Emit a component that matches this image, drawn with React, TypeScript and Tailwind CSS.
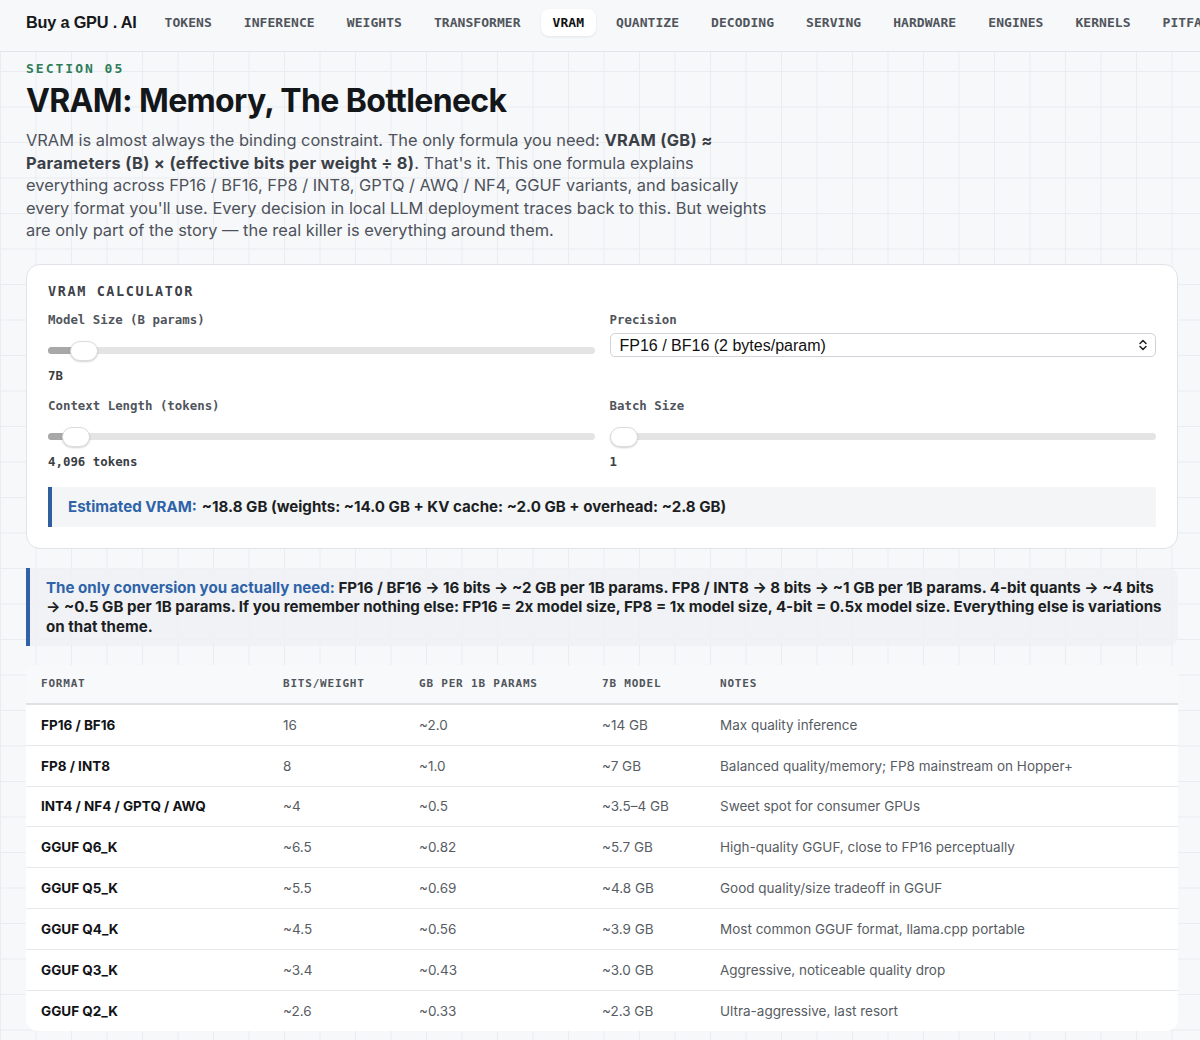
import { useState } from 'react'
import * as Slider from '@radix-ui/react-slider'

const navItems = [
  'TOKENS',
  'INFERENCE',
  'WEIGHTS',
  'TRANSFORMER',
  'VRAM',
  'QUANTIZE',
  'DECODING',
  'SERVING',
  'HARDWARE',
  'ENGINES',
  'KERNELS',
  'PITFALLS',
]

const formats = [
  { name: 'FP16 / BF16', bits: '16', gb: '~2.0', model: '~14 GB', notes: 'Max quality inference' },
  { name: 'FP8 / INT8', bits: '8', gb: '~1.0', model: '~7 GB', notes: 'Balanced quality/memory; FP8 mainstream on Hopper+' },
  { name: 'INT4 / NF4 / GPTQ / AWQ', bits: '~4', gb: '~0.5', model: '~3.5–4 GB', notes: 'Sweet spot for consumer GPUs' },
  { name: 'GGUF Q6_K', bits: '~6.5', gb: '~0.82', model: '~5.7 GB', notes: 'High-quality GGUF, close to FP16 perceptually' },
  { name: 'GGUF Q5_K', bits: '~5.5', gb: '~0.69', model: '~4.8 GB', notes: 'Good quality/size tradeoff in GGUF' },
  { name: 'GGUF Q4_K', bits: '~4.5', gb: '~0.56', model: '~3.9 GB', notes: 'Most common GGUF format, llama.cpp portable' },
  { name: 'GGUF Q3_K', bits: '~3.4', gb: '~0.43', model: '~3.0 GB', notes: 'Aggressive, noticeable quality drop' },
  { name: 'GGUF Q2_K', bits: '~2.6', gb: '~0.33', model: '~2.3 GB', notes: 'Ultra-aggressive, last resort' },
]

function RangeSlider({ value, min, max, onChange }: { value: number; min: number; max: number; onChange: (v: number) => void }) {
  return (
    <Slider.Root
      className="relative flex h-5 w-full items-center select-none"
      value={[value]}
      min={min}
      max={max}
      step={1}
      onValueChange={(v) => onChange(v[0])}
    >
      <Slider.Track className="relative h-[7px] grow overflow-hidden rounded-full bg-[#e4e4e4]">
        <Slider.Range className="absolute h-full bg-[#a8a8a8]" />
      </Slider.Track>
      <Slider.Thumb className="block h-[20px] w-[28px] rounded-full border border-[#dcdcdc] bg-white shadow-[0_1px_2px_rgba(0,0,0,0.18)] outline-none" />
    </Slider.Root>
  )
}

export default function App() {
  const [modelSize, setModelSize] = useState(7)
  const [context, setContext] = useState(4096)
  const [batch, setBatch] = useState(1)

  const mono = "font-['DejaVu_Sans_Mono',monospace]"

  return (
    <div className="min-h-screen w-full bg-[#f7f8fa] bg-[linear-gradient(to_right,#eaecef_1px,transparent_1px),linear-gradient(to_bottom,#eaecef_1px,transparent_1px)] bg-[size:35.5px_35.5px] font-['Inter',sans-serif] text-[#1f2328]">
      <nav className="flex h-[52px] items-start overflow-hidden whitespace-nowrap border-b border-[#e2e4e7] bg-[#f7f8fa] px-[26px] pt-[9px]">
        <span className="font-['Liberation_Sans',sans-serif] text-[16.3px] leading-[27px] font-bold tracking-[-0.2px] text-[#16181b]">
          Buy a GPU . AI
        </span>
        <div className={`ml-4 flex gap-2 ${mono}`}>
          {navItems.map((item) =>
            item === 'VRAM' ? (
              <span
                key={item}
                className="rounded-[8px] bg-white px-3 text-[13px] leading-[27px] font-bold tracking-[0.05px] text-[#111] shadow-[0_1px_3px_rgba(0,0,0,0.08)]"
              >
                {item}
              </span>
            ) : (
              <span key={item} className="px-3 text-[13px] leading-[27px] font-bold tracking-[0.05px] text-[#50555c]">
                {item}
              </span>
            ),
          )}
        </div>
      </nav>

      <main className="pt-[8px] pr-[22px] pb-[10px] pl-[26px]">
        <div className={`${mono} text-[13px] leading-[18px] font-bold tracking-[2px] text-[#2e7d5b]`}>SECTION 05</div>
        <h1 className="mt-[4px] text-[32px] leading-[38px] font-bold tracking-[-0.65px] text-[#14171a]">
          VRAM: Memory, The Bottleneck
        </h1>
        <p className="mt-[9px] max-w-[742px] text-[16.4px] leading-[22.6px] text-[#4d525a]">
          VRAM is almost always the binding constraint. The only formula you need:{' '}
          <strong className="font-bold tracking-[0.3px] text-[#3b4047]">
            VRAM (GB) ≈ Parameters (B) × (effective bits per weight ÷ 8)
          </strong>
          . That's it. This one formula explains everything across FP16 / BF16, FP8 / INT8, GPTQ / AWQ / NF4, GGUF variants,
          and basically every format you'll use. Every decision in local LLM deployment traces back to this. But weights are
          only part of the story — the real killer is everything around them.
        </p>

        <section className="mt-[22px] rounded-[14px] border border-[#e0e3e7] bg-white px-[21px] pt-[16px] pb-[21px]">
          <h2 className={`${mono} text-[13.5px] leading-[20px] font-bold tracking-[1.6px] text-[#3d4148]`}>VRAM CALCULATOR</h2>
          <div className={`mt-[10px] grid grid-cols-2 gap-x-[15px] gap-y-[12px] ${mono}`}>
            <div className="flex flex-col">
              <label className="text-[12.4px] leading-[18px] font-bold text-[#50555c]">Model Size (B params)</label>
              <div className="mt-[12px]">
                <RangeSlider value={modelSize} min={1} max={140} onChange={setModelSize} />
              </div>
              <span className="mt-[6px] text-[12.4px] leading-[18px] font-bold text-[#3a3e44]">{modelSize}B</span>
            </div>
            <div className="flex flex-col">
              <label className="text-[12.4px] leading-[18px] font-bold text-[#50555c]">Precision</label>
              <div className="relative mt-[4px]">
                <select className="h-[24px] w-full appearance-none rounded-[5px] border border-[#cfd2d6] bg-white pl-[9px] font-['Liberation_Sans',sans-serif] text-[16px] text-[#111] outline-none">
                  <option>FP16 / BF16 (2 bytes/param)</option>
                  <option>FP8 / INT8 (1 byte/param)</option>
                  <option>4-bit (0.5 bytes/param)</option>
                </select>
                <svg
                  className="pointer-events-none absolute top-1/2 right-[8px] h-[12px] w-[10px] -translate-y-1/2"
                  viewBox="0 0 10 12"
                  fill="none"
                  stroke="#222"
                  strokeWidth="1.5"
                  strokeLinecap="round"
                  strokeLinejoin="round"
                >
                  <path d="M2 4.5 5 1.5 8 4.5" />
                  <path d="M2 7.5 5 10.5 8 7.5" />
                </svg>
              </div>
            </div>
            <div className="flex flex-col">
              <label className="text-[12.4px] leading-[18px] font-bold text-[#50555c]">Context Length (tokens)</label>
              <div className="mt-[12px]">
                <RangeSlider value={context} min={512} max={131072} onChange={setContext} />
              </div>
              <span className="mt-[6px] text-[12.4px] leading-[18px] font-bold text-[#3a3e44]">
                {context.toLocaleString('en-US')} tokens
              </span>
            </div>
            <div className="flex flex-col">
              <label className="text-[12.4px] leading-[18px] font-bold text-[#50555c]">Batch Size</label>
              <div className="mt-[12px]">
                <RangeSlider value={batch} min={1} max={64} onChange={setBatch} />
              </div>
              <span className="mt-[6px] text-[12.4px] leading-[18px] font-bold text-[#3a3e44]">{batch}</span>
            </div>
          </div>

          <div className="mt-[16px] flex h-[40px] items-center border-l-4 border-[#2f5f9e] bg-[#f4f5f7] pl-[16px] text-[15.1px] font-bold text-[#1c1f23]">
            <span className="text-[#2e63a8]">Estimated VRAM:</span>
            <span className="ml-[5px]">~18.8 GB (weights: ~14.0 GB + KV cache: ~2.0 GB + overhead: ~2.8 GB)</span>
          </div>
        </section>

        <div className="mt-[19px] rounded-r-[10px] border-l-4 border-[#2f62a8] bg-[#eef1f5]/90 py-[10px] pr-[10px] pl-[16px] text-[15.1px] leading-[19.5px] font-bold text-[#1c1f23]">
          <span className="text-[#2e63a8]">The only conversion you actually need:</span> FP16 / BF16 → 16 bits → ~2 GB per 1B
          params. FP8 / INT8 → 8 bits → ~1 GB per 1B params. 4-bit quants → ~4 bits → ~0.5 GB per 1B params. If you remember
          nothing else: FP16 = 2x model size, FP8 = 1x model size, 4-bit = 0.5x model size. Everything else is variations on
          that theme.
        </div>

        <div className="mt-[19px] overflow-hidden rounded-[12px] bg-white">
          <table className="w-full table-fixed border-collapse text-left">
            <colgroup>
              <col className="w-[242px]" />
              <col className="w-[136px]" />
              <col className="w-[183px]" />
              <col className="w-[118px]" />
              <col />
            </colgroup>
            <thead>
              <tr className={`h-[39px] border-b-2 border-[#dfe1e4] bg-[#f8f9fa] ${mono} text-[11px] tracking-[0.8px] text-[#50555c]`}>
                <th className="pl-[15px] font-bold">FORMAT</th>
                <th className="pl-[15px] font-bold">BITS/WEIGHT</th>
                <th className="pl-[15px] font-bold">GB PER 1B PARAMS</th>
                <th className="pl-[15px] font-bold">7B MODEL</th>
                <th className="pl-[15px] font-bold">NOTES</th>
              </tr>
            </thead>
            <tbody className="text-[13.5px] text-[#575c63]">
              {formats.map((f, i) => (
                <tr key={f.name} className={`h-[40.8px] ${i < formats.length - 1 ? 'border-b border-[#e6e8eb]' : ''}`}>
                  <td className="pl-[15px] font-bold text-[#111317]">{f.name}</td>
                  <td className="pl-[15px]">{f.bits}</td>
                  <td className="pl-[15px]">{f.gb}</td>
                  <td className="pl-[15px]">{f.model}</td>
                  <td className="pl-[15px]">{f.notes}</td>
                </tr>
              ))}
            </tbody>
          </table>
        </div>
      </main>
    </div>
  )
}
